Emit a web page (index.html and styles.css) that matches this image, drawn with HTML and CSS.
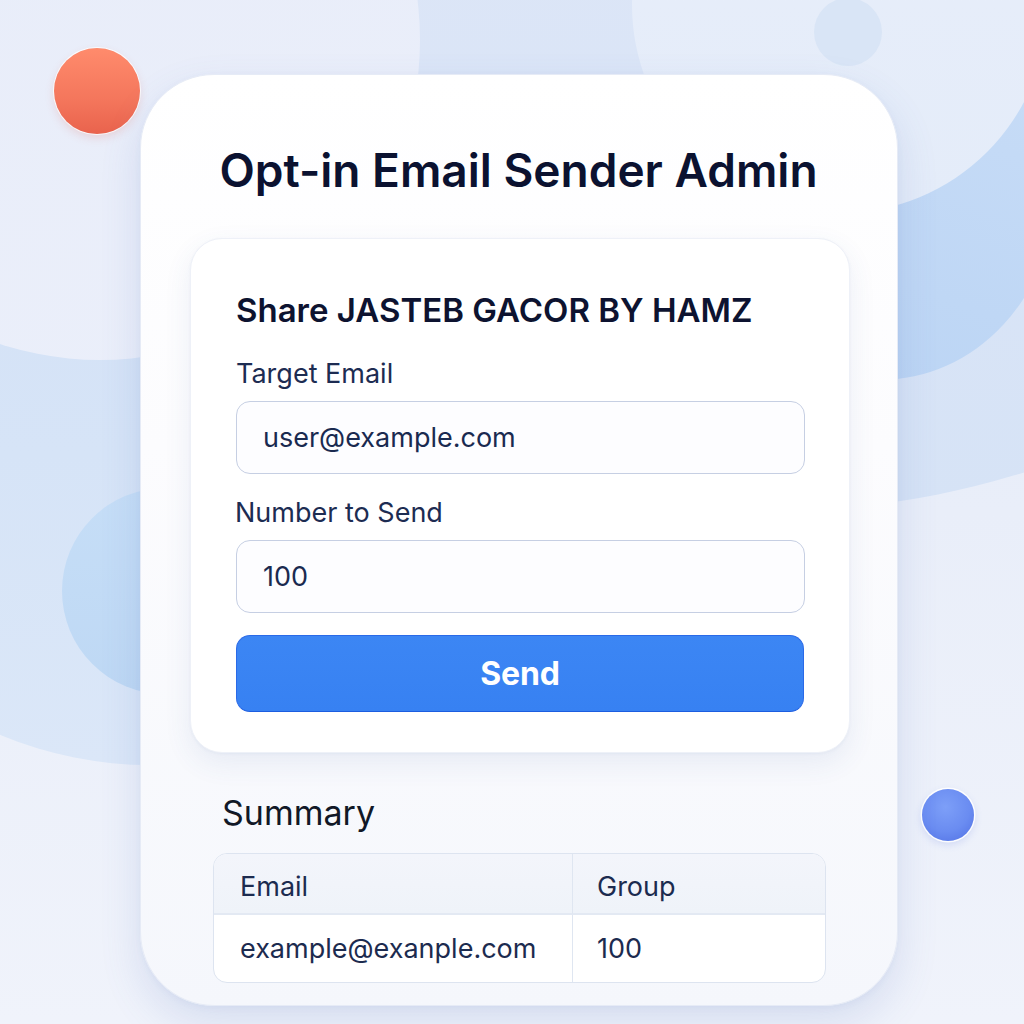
FILE: index.html
```html
<!DOCTYPE html>
<html lang="en">
<head>
<meta charset="utf-8">
<title>Opt-in Email Sender Admin</title>
<link rel="stylesheet" href="styles.css">
</head>
<body>
<div class="backdrop" aria-hidden="true">
  <span class="blob blob-left-big"></span>
  <span class="blob blob-right-mid"></span>
  <span class="blob blob-right-blue"></span>
  <span class="blob blob-top-left"></span>
  <span class="blob blob-top-right"></span>
  <span class="blob blob-top-small"></span>
  <span class="blob blob-left-blue"></span>
  <span class="dot dot-red"></span>
  <span class="dot dot-blue"></span>
</div>

<main class="card">
  <h1 class="title">Opt-in Email Sender Admin</h1>

  <section class="form-card">
    <h2 class="form-title">Share JASTEB GACOR BY HAMZ</h2>

    <label class="field-label" for="email">Target Email</label>
    <input class="field-input" id="email" type="text" value="user@example.com" readonly>

    <label class="field-label field-label-second" for="count">Number to Send</label>
    <input class="field-input" id="count" type="text" value="100" readonly>

    <button class="send-btn" type="button">Send</button>
  </section>

  <section class="summary">
    <h3 class="summary-title">Summary</h3>
    <table class="summary-table">
      <thead>
        <tr><th class="col-email">Email</th><th class="col-group">Group</th></tr>
      </thead>
      <tbody>
        <tr><td class="col-email">example@exanple.com</td><td class="col-group">100</td></tr>
      </tbody>
    </table>
  </section>
</main>
</body>
</html>
```

FILE: styles.css
```css
* { box-sizing: border-box; }

html, body {
  margin: 0;
  padding: 0;
}

body {
  width: 1024px;
  height: 1024px;
  overflow: hidden;
  position: relative;
  font-family: Inter, "Noto Sans", "Liberation Sans", sans-serif;
  background: linear-gradient(180deg, #e3eaf8 0%, #e9eef9 50%, #f0f3fb 100%);
  padding: 74px 0 0 140px;
}

/* decorative background canvas */
.backdrop {
  position: absolute;
  inset: 0;
  overflow: hidden;
  z-index: 0;
}

.blob, .dot {
  position: absolute;
  border-radius: 50%;
}

.blob-left-big {
  left: -238px; top: -11px;
  width: 776px; height: 776px;
  background: linear-gradient(180deg, #d3e0f6 0%, #d6e4f7 60%, #dbe7f8 100%);
}

.blob-right-mid {
  left: -30px; top: -1110px;
  width: 1620px; height: 1620px;
  background: linear-gradient(180deg, #dde6f7 60%, #d6e3f6 100%);
}

.blob-right-blue {
  left: 705px; top: 0px;
  width: 350px; height: 380px;
  background: linear-gradient(200deg, #c9ddf7 0%, #bad4f4 100%);
}

.blob-top-left {
  left: -220px; top: -280px;
  width: 640px; height: 640px;
  background: linear-gradient(160deg, #e7ecf9 0%, #ebeffa 100%);
}

.blob-top-right {
  left: 632px; top: -203px;
  width: 416px; height: 416px;
  background: linear-gradient(180deg, #e8eefa 0%, #e4ecf9 100%);
}

.blob-top-small {
  left: 814px; top: -2px;
  width: 68px; height: 68px;
  background: #d9e5f6;
}

.blob-left-blue {
  left: 62px; top: 488px;
  width: 206px; height: 206px;
  background: linear-gradient(180deg, #c6def7 0%, #bed8f4 100%);
}

.dot-red {
  left: 54px; top: 48px;
  width: 86px; height: 86px;
  background: linear-gradient(180deg, #ff8b6c 0%, #f4765c 60%, #e9634d 100%);
  box-shadow: 0 0 0 1px rgba(255,255,255,0.8), 0 4px 10px rgba(220, 90, 70, 0.18);
  z-index: 2;
}

.dot-blue {
  left: 922px; top: 789px;
  width: 52px; height: 52px;
  background: radial-gradient(circle at 45% 35%, #7d9ff8 0%, #6a8cf1 55%, #4f6fe3 100%);
  box-shadow: 0 0 0 1.5px rgba(255,255,255,0.9), 0 3px 8px rgba(70, 100, 220, 0.2);
}

/* main card */
.card {
  position: relative;
  z-index: 1;
  width: 758px;
  height: 932px;
  border-radius: 74px;
  background: linear-gradient(180deg, #ffffff 0%, #fcfcfe 40%, #f5f7fc 100%);
  border: 1px solid #e6ebf6;
  box-shadow: 0 18px 40px rgba(80, 115, 185, 0.16), 0 2px 6px rgba(80, 115, 185, 0.06);
  padding: 67px 50px 0 49px;
}

.title {
  margin: 0;
  text-align: center;
  font-size: 46px;
  line-height: 56px;
  font-weight: 600;
  color: #0b1230;
  letter-spacing: 0;
}

.form-card {
  margin-top: 40px;
  width: 660px;
  height: 515px;
  background: #ffffff;
  border: 1px solid #eef1f8;
  border-radius: 32px;
  box-shadow: 0 10px 28px rgba(60, 90, 150, 0.09), 0 1px 3px rgba(60, 90, 150, 0.05);
  padding: 51px 45px 0 45px;
  display: flex;
  flex-direction: column;
}

.form-title {
  margin: 0 0 28px 0;
  font-size: 33px;
  line-height: 40px;
  font-weight: 600;
  color: #0d1330;
  letter-spacing: 0;
}

.field-label {
  display: block;
  font-size: 27px;
  line-height: 32px;
  font-weight: 400;
  color: #1d2c52;
  margin-bottom: 11px;
}

.field-label-second {
  margin-top: 23px;
  margin-left: -1px;
}

.field-input {
  display: block;
  width: 569px;
  height: 73px;
  border: 1px solid #c6cfe3;
  border-radius: 14px;
  background: #fdfdff;
  padding: 0 26px;
  font-family: inherit;
  font-size: 27px;
  color: #1a2a50;
  outline: none;
}

.send-btn {
  margin-top: 22px;
  width: 568px;
  height: 77px;
  border: 1px solid #2a6ae8;
  border-bottom-color: #1c5de0;
  border-radius: 14px;
  background: linear-gradient(180deg, #3c86f4 0%, #3781f2 100%);
  color: #ffffff;
  font-family: inherit;
  font-size: 32px;
  font-weight: 700;
  letter-spacing: -0.2px;
  cursor: pointer;
}

.summary {
  margin-top: 40px;
  margin-left: 23px;
  width: 613px;
}

.summary-title {
  margin: 0 0 20px 9px;
  font-size: 34px;
  line-height: 40px;
  font-weight: 400;
  color: #111827;
}

.summary-table {
  width: 613px;
  border-collapse: separate;
  border-spacing: 0;
  border: 1px solid #dde4f0;
  border-radius: 14px;
  overflow: hidden;
  background: #ffffff;
  font-size: 27px;
  color: #1c2b4f;
  table-layout: fixed;
}

.summary-table th,
.summary-table td {
  text-align: left;
  font-weight: 400;
  padding: 0;
}

.summary-table th {
  height: 61px;
  background: linear-gradient(180deg, #f3f5fb 0%, #eff3f9 100%);
  border-bottom: 2px solid #e3e9f3;
  padding-top: 5px;
}

.summary-table td {
  height: 67px;
}

.col-email {
  width: 359px;
  padding-left: 26px !important;
  border-right: 1px solid #dfe6f1;
}

.col-group {
  padding-left: 24px !important;
}
```
